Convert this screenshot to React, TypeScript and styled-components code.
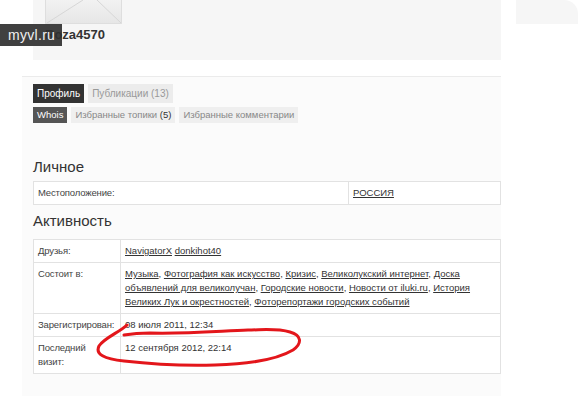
import React from 'react';
import styled, { createGlobalStyle } from 'styled-components';

const GlobalStyle = createGlobalStyle`
  html, body { margin: 0; padding: 0; background: #ffffff; }
  * { box-sizing: border-box; }
`;

// ── Frame ────────────────────────────────────────────────────
const Frame = styled.div`
  position: relative;
  width: 580px;
  height: 396px;
  overflow: hidden;
  display: flex;
  background: #ffffff;
  font-family: "Liberation Sans", Arial, sans-serif;
  color: #333;
`;

const MainCol = styled.div`
  width: 501px;
  display: flex;
  flex-direction: column;
`;

const SideCol = styled.div`
  flex: 1;
  padding: 0 2px 0 15px;
`;

const SideCard = styled.div`
  height: 24px;
  background: #f6f6f6;
  border-top-right-radius: 14px;
`;

// ── Top profile panel ────────────────────────────────────────
const TopPanel = styled.div`
  margin-left: 33px;
  height: 60px;
  background: #f6f6f6;
  padding-left: 12px;
`;

const Avatar = styled.div`
  width: 77px;
  height: 24px;
  svg { display: block; }
`;

const UserName = styled.div`
  margin-top: 3px;
  font-size: 13px;
  line-height: 16px;
  font-weight: bold;
  color: #333;
`;

const Strip = styled.div`
  height: 16px;
  background: #ffffff;
`;

// ── Content panel ────────────────────────────────────────────
const ContentPanel = styled.div`
  flex: 1;
  margin-left: 22px;
  border-top: 1px solid #ebebeb;
  background: #fbfbfb;
  padding: 7px 0 0 11px;
`;

const TabRow = styled.div`
  display: flex;
  gap: 4px;
`;

const Tab = styled.span<{ $active?: boolean }>`
  height: 19px;
  line-height: 19px;
  padding: 0 4px;
  font-size: 10px;
  background: ${p => (p.$active ? '#333' : '#ececec')};
  color: ${p => (p.$active ? '#fff' : '#999')};
`;

const SubTabRow = styled(TabRow)`
  margin-top: 4px;
`;

const SubTab = styled.span<{ $active?: boolean }>`
  height: 16px;
  line-height: 16px;
  padding: 0 4px;
  font-size: 9.5px;
  background: ${p => (p.$active ? '#555' : '#efefef')};
  color: ${p => (p.$active ? '#fff' : '#888')};

  b { font-weight: normal; color: #333; }
`;

const Heading = styled.h2<{ $top: number; $bottom: number }>`
  margin: ${p => p.$top}px 0 ${p => p.$bottom}px;
  font-size: 15px;
  line-height: 18px;
  font-weight: normal;
  color: #333;
`;

const InfoTable = styled.table`
  width: 468px;
  table-layout: fixed;
  border-collapse: collapse;
  background: #ffffff;
  font-size: 9.5px;
  line-height: 14px;
`;

const Label = styled.td<{ $w?: number }>`
  ${p => (p.$w ? `width: ${p.$w}px;` : '')}
  padding: 4px 4px;
  border: 1px solid #e2e2e2;
  vertical-align: top;
  color: #444;
  white-space: nowrap;
  letter-spacing: -0.15px;
`;

const Value = styled.td`
  padding: 4px 4px;
  border: 1px solid #e2e2e2;
  vertical-align: top;
  color: #333;
  white-space: nowrap;
`;

const Link = styled.a`
  color: #333;
  text-decoration: underline;
`;

// ── Overlays ─────────────────────────────────────────────────
const Watermark = styled.div`
  position: absolute;
  left: 0;
  top: 24px;
  width: 62px;
  height: 22px;
  background: rgba(48, 48, 48, 0.92);
  color: #f0f0f0;
  font-size: 14px;
  line-height: 22px;
  padding-left: 8px;
  letter-spacing: 0.3px;
`;

const Marker = styled.svg`
  position: absolute;
  left: 0;
  top: 0;
  pointer-events: none;
`;

const firstGroups = ['Музыка', 'Фотография как искусство', 'Кризис', 'Великолукский интернет'];

export default function App() {
  return (
    <>
      <GlobalStyle />
      <Frame>
        <MainCol>
          <TopPanel>
            <Avatar>
              <svg width="77" height="24" viewBox="0 0 77 24">
                <defs>
                  <linearGradient id="av" x1="0" y1="0" x2="0" y2="1">
                    <stop offset="0" stopColor="#f2f2f2" />
                    <stop offset="1" stopColor="#e6e6e6" />
                  </linearGradient>
                </defs>
                <rect x="0" y="0" width="77" height="24" fill="url(#av)" />
                <path d="M2 23 L38 0 M76 23 L52 0" stroke="#d6d6d6" strokeWidth="1" fill="none" />
                <path d="M0.5 0 V23.5 H76.5 V0" stroke="#dedede" strokeWidth="1" fill="none" />
              </svg>
            </Avatar>
            <UserName>Roza4570</UserName>
          </TopPanel>
          <Strip />
          <ContentPanel>
            <TabRow>
              <Tab $active>Профиль</Tab>
              <Tab>Публикации (13)</Tab>
            </TabRow>
            <SubTabRow>
              <SubTab $active>Whois</SubTab>
              <SubTab>Избранные топики <b>(5)</b></SubTab>
              <SubTab>Избранные комментарии</SubTab>
            </SubTabRow>

            <Heading $top={35} $bottom={5}>Личное</Heading>
            <InfoTable>
              <tbody>
                <tr>
                  <Label $w={315}>Местоположение:</Label>
                  <Value><Link href="#">РОССИЯ</Link></Value>
                </tr>
              </tbody>
            </InfoTable>

            <Heading $top={7} $bottom={9}>Активность</Heading>
            <InfoTable>
              <tbody>
                <tr>
                  <Label $w={87}>Друзья:</Label>
                  <Value>
                    <Link href="#">NavigatorX</Link> <Link href="#">donkihot40</Link>
                  </Value>
                </tr>
                <tr>
                  <Label>Состоит в:</Label>
                  <Value>
                    {firstGroups.map(g => (
                      <React.Fragment key={g}>
                        <Link href="#">{g}</Link>,{' '}
                      </React.Fragment>
                    ))}
                    <Link href="#">Доска<br />объявлений для великолучан</Link>,{' '}
                    <Link href="#">Городские новости</Link>,{' '}
                    <Link href="#">Новости от iluki.ru</Link>,{' '}
                    <Link href="#">История<br />Великих Лук и окрестностей</Link>,{' '}
                    <Link href="#">Фоторепортажи городских событий</Link>
                  </Value>
                </tr>
                <tr>
                  <Label>Зарегистрирован:</Label>
                  <Value>08 июля 2011, 12:34</Value>
                </tr>
                <tr>
                  <Label>Последний<br />визит:</Label>
                  <Value>12 сентября 2012, 22:14</Value>
                </tr>
              </tbody>
            </InfoTable>
          </ContentPanel>
        </MainCol>
        <SideCol>
          <SideCard />
        </SideCol>

        <Watermark>myvl.ru</Watermark>
        <Marker width="580" height="396" viewBox="0 0 580 396">
          <path
            d="M127 325 C120 332 104 338 99 346 C95 354 104 359 124 361 C150 364 180 366 215 365 C250 364 278 359 293 350 C303 343 301 335 290 332 C276 328 262 330 248 330 C220 331 185 334 150 333 C138 333 130 334 124 335"
            stroke="#e3161b"
            strokeWidth="3"
            strokeLinecap="round"
            strokeLinejoin="round"
            fill="none"
          />
        </Marker>
      </Frame>
    </>
  );
}
